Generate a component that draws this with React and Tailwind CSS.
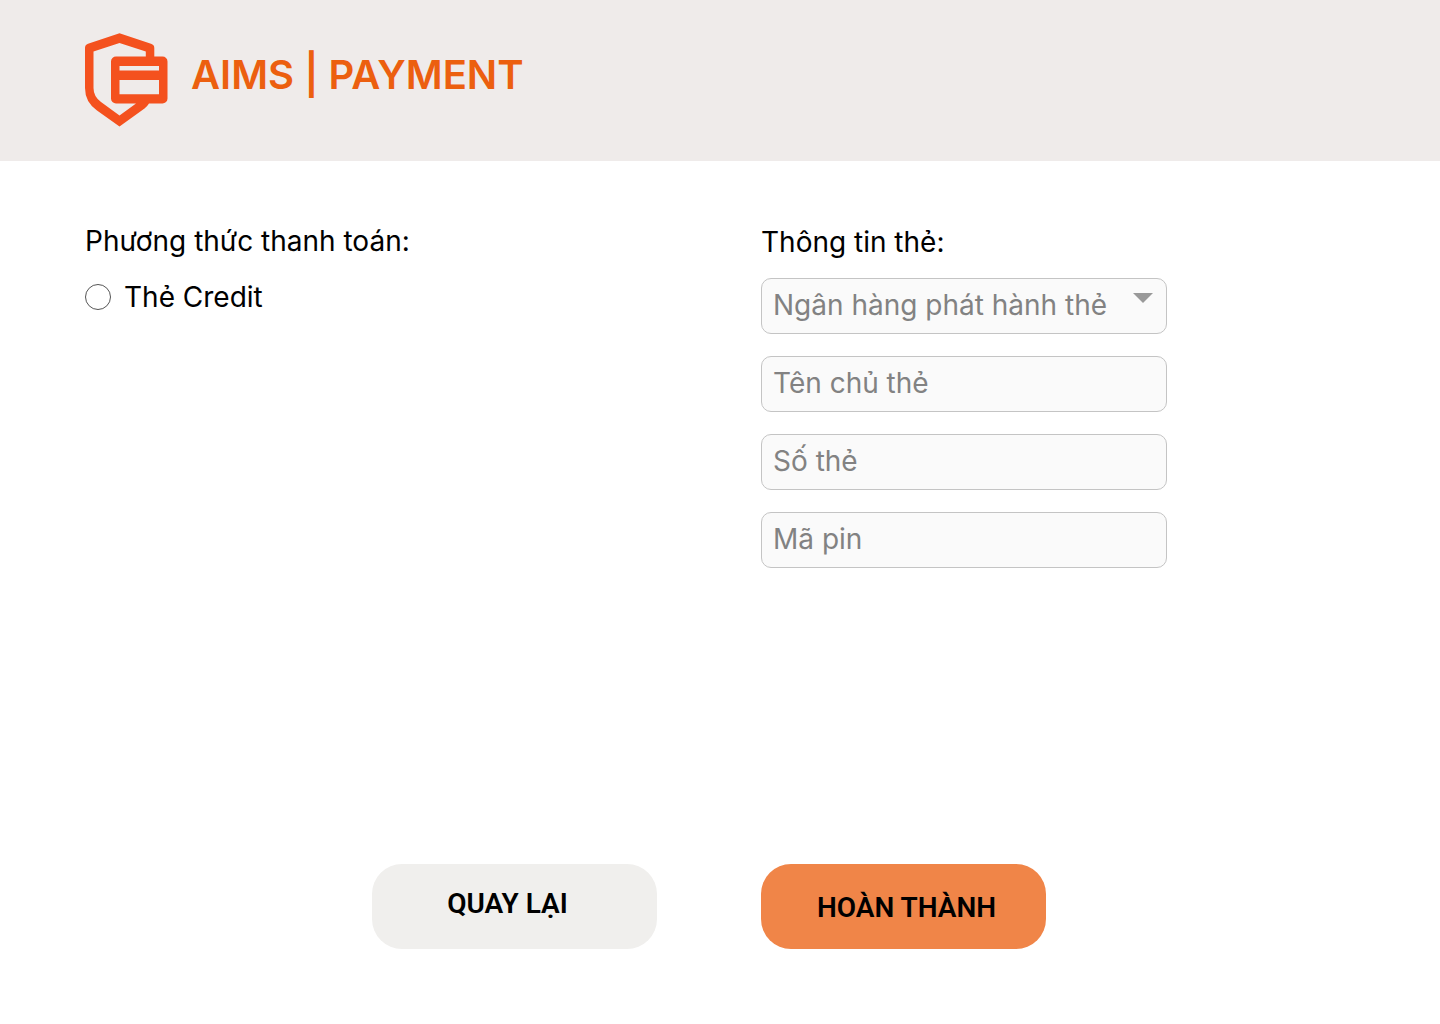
function Logo() {
  return (
    <svg className="h-24 w-[84px] shrink-0" viewBox="84 32 84 96" fill="#F4511E" aria-hidden="true">
      <path fillRule="evenodd" d="M119.500 33.300L151 43.700Q154.300 44.800 154.300 48V56.500H162.500A5 5 0 0 1 167.500 61.500V98.500A5 5 0 0 1 162.500 103.500H149Q147.500 106 144.500 108.500L119.500 126.500L97 110.500Q85 102 85 88V48Q85 44.800 88 43.700ZM119.500 43L93.500 51.500V88Q93.500 96.500 101 102L119.500 115.500L136 103.500H116A5 5 0 0 1 111 98.500V61.500A5 5 0 0 1 116 56.500H145.800V51.500ZM119.500 66V70.500H159V66ZM119.500 80V94.200H159V80Z" />
    </svg>
  );
}

const fieldClass =
  "block h-14 w-full appearance-none rounded-[10px] border border-[#c4c4c4] bg-[#fafafa] px-[11px] pb-[2px] text-[28px] leading-[34px] text-[#828282] placeholder:text-[#828282] placeholder:opacity-100";

const buttonClass =
  "h-[85px] w-[285px] rounded-[30px] font-['Roboto',sans-serif] text-[28px] leading-8 font-semibold";

export default function App() {
  return (
    <div className="flex min-h-screen flex-col bg-white font-['Inter',sans-serif] text-black">
      <header className="flex items-start gap-[23px] bg-[#efebea] px-[84px] pt-8 pb-[33px]">
        <Logo />
        <h1 className="pt-[19px] text-[40px] leading-[48px] font-semibold text-[#ec5f0f]">AIMS | PAYMENT</h1>
      </header>
      <main className="flex grow flex-col justify-between pb-[75px]">
        <div className="grid grid-cols-[676px_minmax(0,406px)] px-[85px] pt-[63px]">
          <fieldset>
            <legend className="text-[28px] leading-[34px]">Phương thức thanh toán:</legend>
            <label className="mt-[22px] flex items-center gap-[13px] text-[28px] leading-[34px]">
              <input type="radio" name="method" className="size-[26px] appearance-none rounded-full border border-[#555] bg-white checked:border-8" />
              Thẻ Credit
            </label>
          </fieldset>
          <section className="flex flex-col gap-[22px]">
            <h2 className="-mb-1 text-[28px] leading-9">Thông tin thẻ:</h2>
            <div className="relative">
              <select aria-label="Ngân hàng phát hành thẻ" className={fieldClass}>
                <option>Ngân hàng phát hành thẻ</option>
              </select>
              <svg className="pointer-events-none absolute top-[15px] right-[14px] h-[10px] w-5" viewBox="0 0 20 10" fill="#999" aria-hidden="true">
                <path d="M0 0H20L10 10Z" />
              </svg>
            </div>
            <input aria-label="Tên chủ thẻ" placeholder="Tên chủ thẻ" className={fieldClass} />
            <input aria-label="Số thẻ" placeholder="Số thẻ" className={fieldClass} />
            <input aria-label="Mã pin" placeholder="Mã pin" className={fieldClass} />
          </section>
        </div>
        <div className="flex gap-[104px] pl-[372px]">
          <button className={`${buttonClass} bg-[#f0efed] pr-[14px] pb-[6px]`}>QUAY LẠI</button>
          <button className={`${buttonClass} bg-[#f08548] pt-[2px] pl-[6px]`}>HOÀN THÀNH</button>
        </div>
      </main>
    </div>
  );
}
